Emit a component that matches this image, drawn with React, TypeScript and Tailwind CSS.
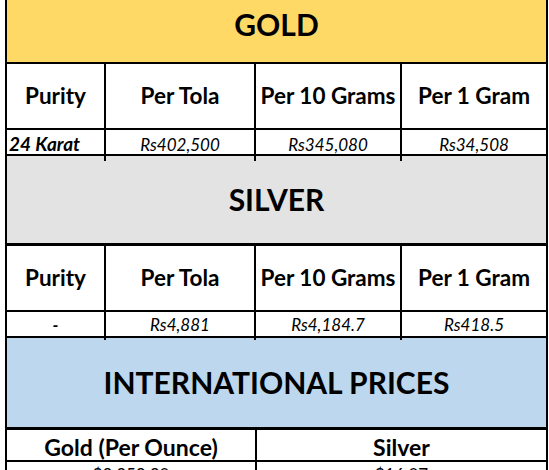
const font = { fontFamily: "Lato, 'Open Sans', sans-serif" };

function HeadRow() {
  const cells = ["Purity", "Per Tola", "Per 10 Grams", "Per 1 Gram"];
  return (
    <div className="grid h-[66px] grid-cols-[99px_150px_146px_1fr] border-b-2 border-black">
      {cells.map((c, i) => (
        <div
          key={c}
          className={`flex items-center justify-center text-[22.5px] font-bold whitespace-nowrap ${i < 3 ? "border-r-2 border-black" : ""}`}
        >
          {c}
        </div>
      ))}
    </div>
  );
}

function DataRow({ first, values, bold }: { first: string; values: string[]; bold?: boolean }) {
  return (
    <div className="grid h-[26px] grid-cols-[99px_150px_146px_1fr] border-b-2 border-black text-[17px] italic">
      <div className={`flex items-center pb-[2px] border-r-2 border-black font-bold ${bold ? "justify-start pl-[2px] text-[19px]" : "justify-center"}`}>
        {first}
      </div>
      {values.map((v, i) => (
        <div key={i} className={`flex items-center justify-center pb-[2px] ${i < 2 ? "border-r-2 border-black" : ""}`}>
          {v}
        </div>
      ))}
    </div>
  );
}

export default function App() {
  return (
    <div className="h-[470px] w-[549px] overflow-hidden bg-white text-black" style={font}>
      <div className="ml-[5px] mt-[-14px] w-[543px] border-x-2 border-black">
        <div className="flex h-[78px] items-center justify-center border-b-2 border-black bg-[#ffd966] text-[30px] font-bold">
          GOLD
        </div>
        <HeadRow />
        <DataRow first="24 Karat" bold values={["Rs402,500", "Rs345,080", "Rs34,508"]} />
        <div className="flex h-[90px] items-center justify-center border-b-[3px] border-black bg-[#e3e3e3] text-[30px] font-bold">
          SILVER
        </div>
        <HeadRow />
        <DataRow first="-" values={["Rs4,881", "Rs4,184.7", "Rs418.5"]} />
        <div className="flex h-[92px] items-center justify-center border-b-[3px] border-black bg-[#bdd7ee] text-[30px] font-bold">
          INTERNATIONAL PRICES
        </div>
        <div className="grid h-[32px] grid-cols-[250px_1fr] border-b-2 border-black text-[23px] font-bold">
          <div className="flex items-center justify-center border-r-2 border-black">Gold (Per Ounce)</div>
          <div className="flex items-center justify-center">Silver</div>
        </div>
        <div className="grid h-[26px] grid-cols-[250px_1fr] border-b-2 border-black text-[17px]">
          <div className="flex items-center justify-center border-r-2 border-black">$2,352.30</div>
          <div className="flex items-center justify-center">$16.07</div>
        </div>
      </div>
    </div>
  );
}
